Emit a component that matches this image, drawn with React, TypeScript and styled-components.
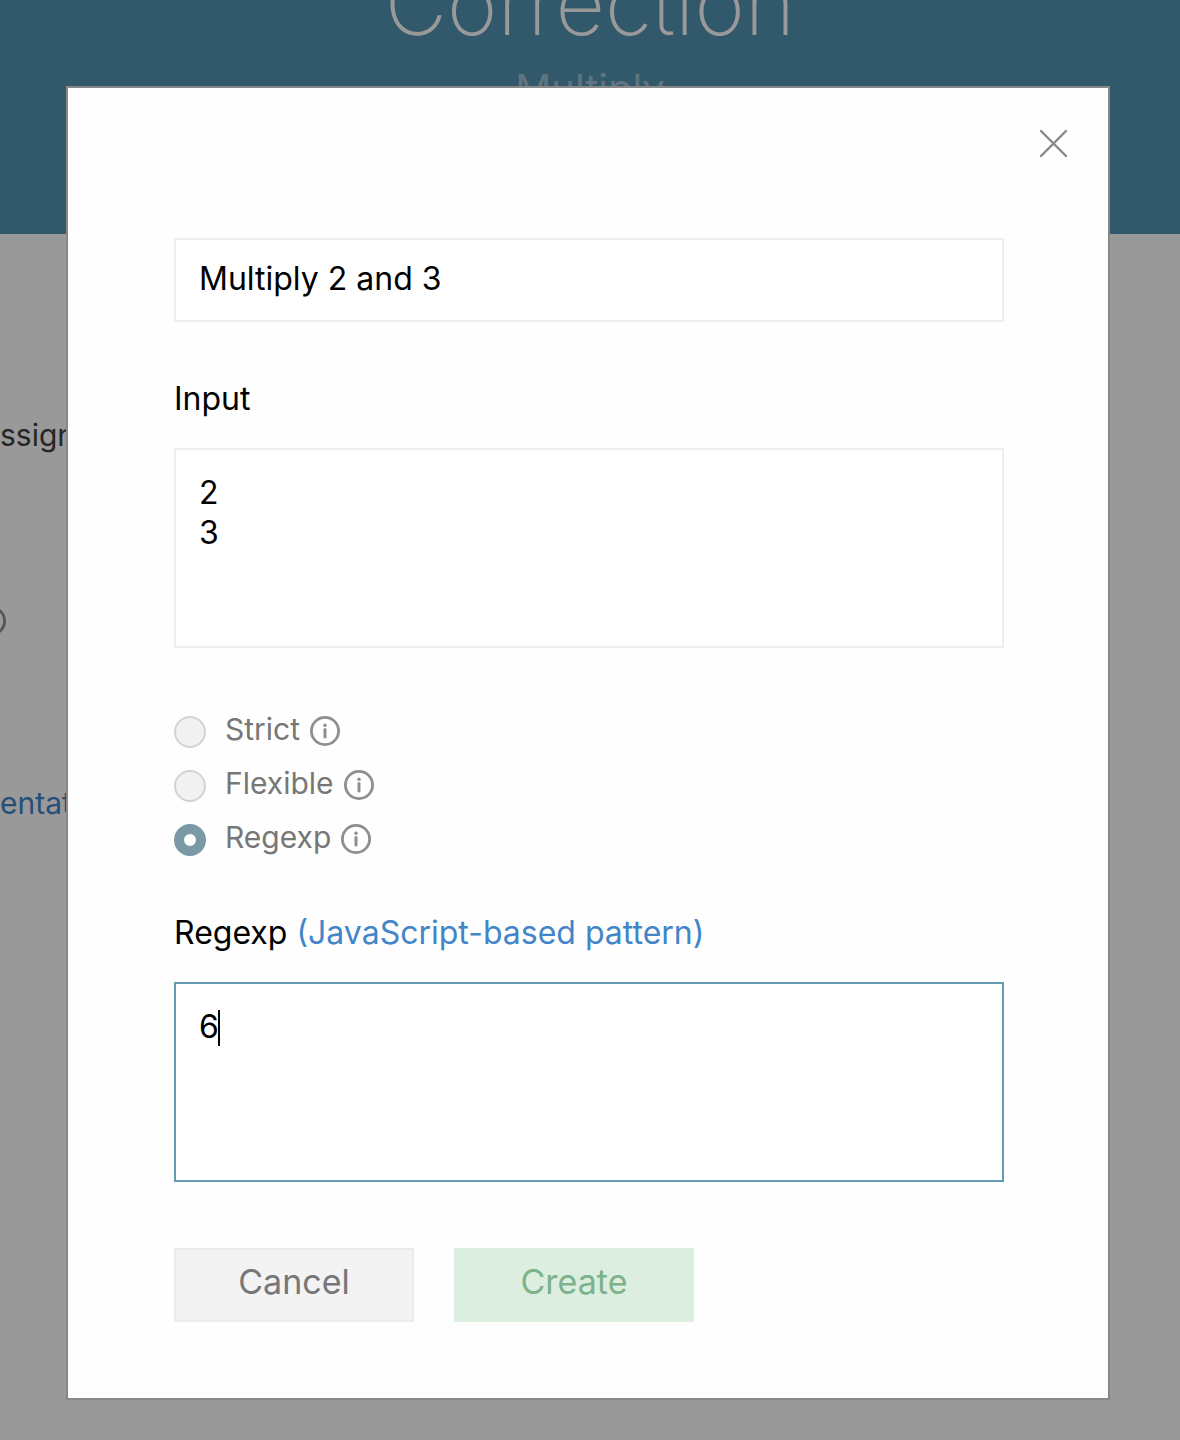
import React, { useState } from "react";
import styled, { createGlobalStyle } from "styled-components";

const GlobalStyle = createGlobalStyle`
  * { box-sizing: border-box; }
  body {
    margin: 0;
    background: #fff;
    color: #000;
    font-family: Inter, "Open Sans", "Liberation Sans", sans-serif;
    font-size: 32px;
    line-height: 40px;
  }
  input, textarea, button { font: inherit; }
`;

const Page = styled.div`
  min-height: 100vh;
  overflow: hidden;
`;

const Banner = styled.header`
  display: flex;
  flex-direction: column;
  justify-content: flex-end;
  align-items: center;
  height: 234px;
  padding-bottom: 120px;
  overflow: hidden;
  background: #5394b2;
  color: #fff;
`;

const Title = styled.h1`
  flex: none;
  margin: 0;
  font-size: 86px;
  line-height: 100px;
  font-weight: 200;
`;

const Subtitle = styled.p`
  flex: none;
  margin: 10px 0 0;
  font-size: 40px;
  line-height: 50px;
  color: rgba(255, 255, 255, 0.45);
`;

const Content = styled.main`
  display: flex;
  flex-direction: column;
  align-items: flex-start;
  padding-top: 181px;
`;

const Line = styled.p`
  margin: 0;
  font-size: 30px;
  color: #3f3f3f;
`;

const Clip = styled.div`
  display: flex;
  justify-content: flex-end;
  width: 6px;
  margin: 151px 0 147px;
  overflow: hidden;
  color: #8e8e93;
  svg { flex: none; }
`;

const Link = styled.a`
  color: #4285c9;
  text-decoration: none;
`;

const Overlay = styled.div`
  position: fixed;
  inset: 0;
  padding: 86px 70px 40px 66px;
  overflow: hidden;
  background: rgba(0, 0, 0, 0.4);
`;

const Dialog = styled.div`
  border: 2px solid #888;
  background: #fefefe;
`;

const DialogBar = styled.div`
  display: flex;
  justify-content: flex-end;
  align-items: flex-start;
  height: 150px;
  padding: 35px 35px 0;
`;

const Close = styled.button`
  display: flex;
  padding: 5px;
  border: 0;
  background: none;
  color: #888;
`;

const Form = styled.form`
  display: flex;
  flex-direction: column;
  padding: 0 104px 76px 106px;
`;

const fieldStyle = `
  display: block;
  width: 100%;
  margin: 0;
  border: 2px solid #eee;
  border-radius: 0;
  background: #fff;
  color: #000;
  outline: none;
`;

const TextInput = styled.input`
  ${fieldStyle}
  height: 84px;
  padding: 0 23px 4px;
`;

const TextArea = styled.textarea`
  ${fieldStyle}
  height: 200px;
  padding: 23px;
  resize: none;
  &.active {
    border-color: #659bb3;
    caret-color: transparent;
  }
`;

const FieldHead = styled.div`
  margin: 57px 0 29px;
`;

const AreaWrap = styled.div`
  position: relative;
`;

const Caret = styled.span`
  position: absolute;
  top: 28px;
  left: calc(24px + 1ch);
  width: 2px;
  height: 36px;
  background: #000;
`;

const Modes = styled.fieldset`
  display: flex;
  flex-direction: column;
  gap: 22px;
  margin: 68px 0 0;
  padding: 0;
  border: 0;
`;

const Mode = styled.div`
  display: flex;
  align-items: center;
  height: 32px;
  font-size: 30px;
  color: #777;
`;

const Radio = styled.input`
  appearance: none;
  width: 32px;
  height: 32px;
  margin: 0 19px 0 0;
  border: 2px solid #d3d3d3;
  border-radius: 50%;
  background: #f1f1f1;
  &:checked {
    border: 10px solid #7999a7;
    background: #fff;
  }
`;

const ModeLabel = styled.label`
  padding-bottom: 6px;
  margin-right: 10px;
`;

const InfoButton = styled.button`
  display: flex;
  padding: 0 0 2px;
  border: 0;
  background: none;
  color: #8e8e93;
`;

const Actions = styled.div`
  display: flex;
  gap: 40px;
  margin-top: 66px;
`;

const Action = styled.button<{ $primary?: boolean }>`
  width: 240px;
  height: 74px;
  padding: 0 0 6px;
  border: 2px solid ${(p) => (p.$primary ? "#dceedf" : "#ebebeb")};
  background: ${(p) => (p.$primary ? "#dceedf" : "#f3f3f3")};
  color: ${(p) => (p.$primary ? "#7cb38b" : "#777779")};
  font-size: 34px;
`;

const InfoIcon = () => (
  <svg width="30" height="30" viewBox="0 0 30 30" fill="none" stroke="currentColor" aria-hidden="true">
    <circle cx="15" cy="15" r="13.6" strokeWidth="2.8" />
    <circle cx="15" cy="9.3" r="1.7" fill="currentColor" stroke="none" />
    <path d="M15 13.6v7.4" strokeWidth="3" strokeLinecap="round" />
  </svg>
);

const CloseIcon = () => (
  <svg width="30" height="30" viewBox="0 0 30 30" fill="none" stroke="currentColor" strokeWidth="2.4" strokeLinecap="round" aria-hidden="true">
    <path d="M3 3l25 25M28 3l-25 25" />
  </svg>
);

const modes = ["Strict", "Flexible", "Regexp"];

export default function App() {
  const [mode, setMode] = useState("Regexp");
  return (
    <>
      <GlobalStyle />
      <Page>
        <Banner>
          <Title>Correction</Title>
          <Subtitle>Multiply</Subtitle>
        </Banner>
        <Content>
          <Line>ssign</Line>
          <Clip><InfoIcon /></Clip>
          <Line><Link href="#docs">entat</Link></Line>
        </Content>
      </Page>
      <Overlay>
        <Dialog role="dialog" aria-modal="true" aria-label="Test case">
          <DialogBar>
            <Close type="button" aria-label="Close"><CloseIcon /></Close>
          </DialogBar>
          <Form onSubmit={(e) => e.preventDefault()}>
            <TextInput aria-label="Name" defaultValue="Multiply 2 and 3" />
            <FieldHead><label htmlFor="case-input">Input</label></FieldHead>
            <TextArea id="case-input" defaultValue={"2\n3"} />
            <Modes aria-label="Comparison">
              {modes.map((name) => (
                <Mode key={name}>
                  <Radio
                    type="radio"
                    name="mode"
                    id={`mode-${name}`}
                    checked={mode === name}
                    onChange={() => setMode(name)}
                  />
                  <ModeLabel htmlFor={`mode-${name}`}>{name}</ModeLabel>
                  <InfoButton type="button" aria-label={`About ${name}`}><InfoIcon /></InfoButton>
                </Mode>
              ))}
            </Modes>
            <FieldHead>
              <label htmlFor="case-pattern">Regexp</label>{" "}
              <Link href="#pattern">(JavaScript-based pattern)</Link>
            </FieldHead>
            <AreaWrap>
              <TextArea id="case-pattern" className="active" defaultValue="6" />
              <Caret />
            </AreaWrap>
            <Actions>
              <Action type="button">Cancel</Action>
              <Action type="submit" $primary>Create</Action>
            </Actions>
          </Form>
        </Dialog>
      </Overlay>
    </>
  );
}
